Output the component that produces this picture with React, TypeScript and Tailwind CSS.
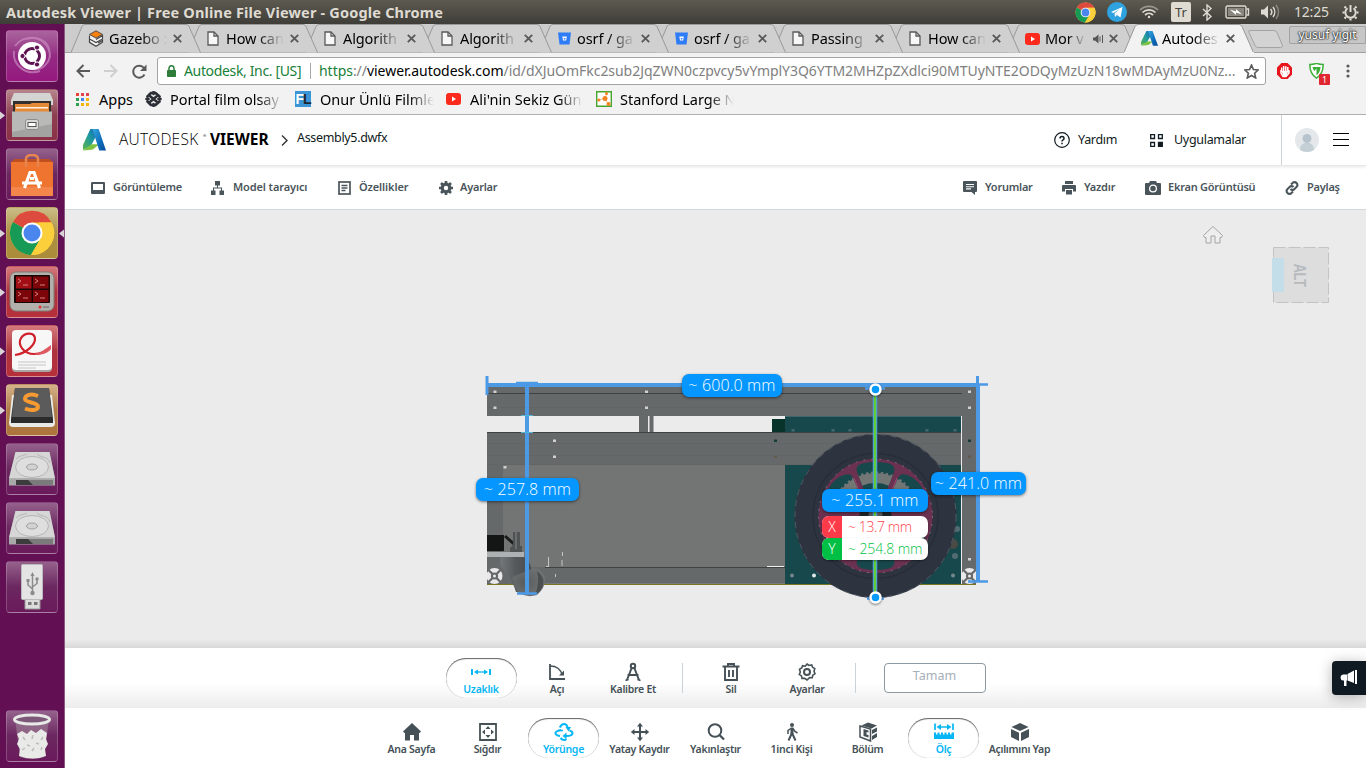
import React from "react";

type Kids = { children?: React.ReactNode };

/* ---------- small glyphs ---------- */

const PageIcon = () => (
  <svg width="12" height="15" viewBox="0 0 12 15" fill="#f7f7f7" stroke="#5a5a5a" strokeWidth="1.3">
    <path d="M1 1h6l4 4v9H1z" />
    <path d="M7 1v4h4" fill="none" />
  </svg>
);
const GazeboIcon = () => (
  <svg width="16" height="17" viewBox="0 0 16 17">
    <path d="M1.500 5.500L8 9l6.500-3.500V12L8 16 1.500 12z" fill="#f4f4f4" />
    <path d="M8 .8l6.500 3.600L8 8 1.500 4.400z" fill="#f58113" stroke="#3a3a3a" strokeWidth=".8" />
    <path d="M1.500 5.500V12.300L8 16.200l6.500-3.900M1.500 9L8 12.500l6.500-3.500V5.500L8 9.500M14.500 12.300V10.500L10 13" fill="none" stroke="#444" strokeWidth="1.200" />
  </svg>
);
const BucketIcon = () => (
  <svg width="13" height="13" viewBox="0 0 13 13">
    <path d="M0 .5h13L11.500 12.500h-10z" fill="#2f7df6" />
    <path d="M4.300 4.500h4.500l-.7 4H5z" fill="#fff" />
    <path d="M5.800 6h1.600v1.500H5.800z" fill="#2f7df6" />
  </svg>
);
const YouTube = () => (
  <svg width="15" height="12" viewBox="0 0 15 12">
    <rect width="15" height="12" rx="3" fill="#fb2a1d" />
    <path d="M6 3.500v5L10 6z" fill="#fff" />
  </svg>
);
const ALogo = ({ w = 23, h = 22 }: { w?: number; h?: number }) => (
  <svg width={w} height={h} viewBox="0 0 22 22" preserveAspectRatio="none">
    <defs>
      <linearGradient id="alg" x1="0" y1="1" x2="1" y2="0">
        <stop offset="0" stopColor="#62b54a" />
        <stop offset=".55" stopColor="#1d9aa0" />
        <stop offset="1" stopColor="#1468b8" />
      </linearGradient>
      <linearGradient id="alb" x1="0" y1="0" x2="1" y2="1">
        <stop offset="0" stopColor="#37a7dd" />
        <stop offset=".6" stopColor="#0d6cbb" />
        <stop offset="1" stopColor="#0a4a98" />
      </linearGradient>
    </defs>
    <path d="M7 0h6l-1 8-4.500 9L0 21V16z" fill="url(#alg)" />
    <path d="M0 21.500l8-6.200h7.500l-6 5.200-9 1z" fill="#7cc243" />
    <path d="M9 0h6l7 21.500h-6.500z" fill="url(#alb)" />
  </svg>
);
const ChromeLogo = ({ s }: { s: number }) => (
  <svg width={s} height={s} viewBox="0 0 46 46">
    <circle cx="23" cy="23" r="22" fill="#fbcf3b" />
    <path d="M23 23L3.950 12A22 22 0 0 1 42.500 12.500H23z" fill="#dd4b3e" />
    <path d="M3.950 12A22 22 0 0 0 22 45l10-17.500-9-4.500z" fill="#169a55" />
    <path d="M42.500 12.500A22 22 0 0 1 22 45l10-17 2-8-4-7.500z" fill="#fbcf3b" />
    <circle cx="23" cy="23" r="10.500" fill="#fff" />
    <circle cx="23" cy="23" r="8.500" fill="#4a86ee" />
  </svg>
);

/* ---------- system bar ---------- */

const SystemBar = () => (
  <header className="flex h-6 shrink-0 items-center bg-linear-to-b from-[#5d5a50] to-[#3e3d38] pl-[6px] font-['Noto_Sans',sans-serif] text-[#dfdbd2]">
    <h1 className="w-[500px] whitespace-nowrap text-[14.500px] font-bold leading-6 tracking-[0.180px]">
      Autodesk Viewer | Free Online File Viewer - Google Chrome
    </h1>
    <div className="ml-auto flex h-6 w-[291px] items-center">
      <ChromeLogo s={21} />
      <svg className="ml-[11px]" width="20" height="20" viewBox="0 0 20 20">
        <circle cx="10" cy="10" r="10" fill="#2fa3df" />
        <path d="M4 10l11.500-5-2 10.500-3.500-2.500-2 2-.5-3.500L12.500 7l-6 4z" fill="#fff" />
      </svg>
      <svg className="ml-[12px]" width="20" height="14" viewBox="0 0 20 14" fill="none" stroke="#dfdbd2" strokeWidth="1.700">
        <path d="M1 5a13 13 0 0 1 18 0" opacity=".5" />
        <path d="M3.500 7.500a9.500 9.500 0 0 1 13 0M6 10a6 6 0 0 1 8 0" />
        <circle cx="10" cy="12" r="1.200" fill="#dfdbd2" stroke="none" />
      </svg>
      <div className="ml-[12px] h-5 w-5 rounded-[2px] bg-[#dfdbd2] text-center text-[13px] leading-5 text-[#45443e]">Tr</div>
      <svg className="ml-[10px]" width="12" height="17" viewBox="0 0 12 17" fill="none" stroke="#dfdbd2" strokeWidth="1.400">
        <path d="M2 5l8 7.500L6 16V1l4 3.500L2 12" />
      </svg>
      <svg className="ml-[12px]" width="25" height="14" viewBox="0 0 25 14" fill="none" stroke="#dfdbd2" strokeWidth="1.400">
        <rect x="1" y="1" width="20" height="12" rx="1.500" />
        <path d="M21.500 4h2v6h-2" />
        <rect x="3" y="3" width="16" height="8" fill="#8a877e" stroke="none" />
        <path d="M5 4.500l6 2V4l6 5.500-6-2V10z" fill="#fff" stroke="none" />
      </svg>
      <svg className="ml-[11px]" width="20" height="16" viewBox="0 0 20 16" fill="none" stroke="#dfdbd2" strokeWidth="1.500">
        <path d="M0 5.500h3l4-4v13l-4-4H0z" fill="#dfdbd2" stroke="none" />
        <path d="M9.500 5a4.500 4.500 0 0 1 0 6M12 3a8 8 0 0 1 0 10" />
        <path d="M15 1a11 11 0 0 1 0 14" opacity=".4" />
      </svg>
      <span className="ml-[13px] w-[36px] whitespace-nowrap text-[14px] leading-6 tracking-[-0.200px]">12:25</span>
      <svg className="ml-[12px]" width="17" height="17" viewBox="0 0 17 17" fill="none" stroke="#dfdbd2">
        <path d="M5.500 4.300a5.200 5.200 0 1 0 6 0" strokeWidth="2" />
        <path d="M8.500 1v7" strokeWidth="2" />
        <path d="M4 4L2.500 2.500M13 4l1.500-1.500M2.500 8.500H.5M14.500 8.500h2M4 13l-1.500 1.500M13 13l1.500 1.500M8.500 14.500v2" strokeWidth="2.200" />
      </svg>
    </div>
  </header>
);

/* ---------- launcher ---------- */

const Tile = ({ bg, arrow, right, children }: Kids & { bg: string; arrow?: boolean; right?: boolean }) => (
  <div className={`relative flex h-[52px] w-[52px] shrink-0 items-center justify-center rounded-[4px] border border-white/20 ${bg}`}>
    {arrow && (
      <svg className="absolute top-[21px] -left-[7px]" width="5" height="9" viewBox="0 0 5 9">
        <path d="M0 .5l5 4-5 4z" fill="#d9d4d8" />
      </svg>
    )}
    {right && (
      <svg className="absolute top-[21px] -right-[7px]" width="5" height="9" viewBox="0 0 5 9">
        <path d="M5 .5l-5 4 5 4z" fill="#d9d4d8" />
      </svg>
    )}
    {children}
  </div>
);
const glass = "bg-linear-to-b from-[#95618c] via-[#6b2760] to-[#6a1a5b]";

const Disk = () => (
  <svg width="46" height="36" viewBox="0 0 46 36">
    <path d="M6.500 1h34L46 27v7H0v-7z" fill="#8a8a8a" />
    <path d="M6.500 1h34L46 27.500H0z" fill="#d6d6d6" />
    <path d="M0 28h46v6.500H0z" fill="#a9a9a9" />
    <path d="M7 29h37v5H7z" fill="#3c3c3c" />
    <path d="M19 29h25v5H24z" fill="#7b7b7b" />
    <ellipse cx="23" cy="16" rx="16.500" ry="10.500" fill="#dedede" stroke="#b5b5b5" />
    <ellipse cx="23" cy="16" rx="5.500" ry="3" fill="#d2d2d2" stroke="#a2a2a2" />
    <path d="M7 8C11 4 14 5 18 3M28 3c4 4 11 2 13 9" fill="none" stroke="#b5b5b5" />
  </svg>
);

const Launcher = () => (
  <nav className="flex w-[65px] shrink-0 flex-col gap-[7px] border-r border-[#8a5a82] bg-[#620f53] pt-[6px] pb-[6px] pl-[6px]">
    <Tile bg="bg-linear-to-b from-[#a9649d] via-[#942a83] to-[#95177f]">
      <svg width="50" height="50" viewBox="0 0 50 50" fill="none">
        <path d="M8 15C16 3 38 4 42 18c4 14-8 22-17 20M7 20c-2 14 12 25 26 20M19 8c14-4 24 6 24 18" stroke="#c98bc0" strokeWidth="2" opacity=".7" />
        <circle cx="25" cy="25" r="14" fill="#fff" />
        <circle cx="25" cy="25" r="7.500" stroke="#5d1350" strokeWidth="3" />
        <path d="M25 25L14 25M25 25l6-10M25 25l6 10" stroke="#fff" strokeWidth="1.500" />
        <circle cx="25" cy="25" r="5.500" fill="#fff" />
        <circle cx="15.500" cy="25" r="2.600" fill="#5d1350" stroke="#fff" />
        <circle cx="30" cy="16.500" r="2.600" fill="#5d1350" stroke="#fff" />
        <circle cx="30" cy="33.500" r="2.600" fill="#5d1350" stroke="#fff" />
      </svg>
    </Tile>
    <Tile arrow bg="bg-linear-to-b from-[#b6868d] via-[#8d3f50] to-[#8d3048]">
      <svg width="44" height="45" viewBox="0 0 44 45">
        <path d="M4 0h36l3 7v5H1V7z" fill="#d4d4d2" />
        <path d="M3 8h38v15H3z" fill="#33302d" />
        <path d="M5 11h15l2-1h17v14H5z" fill="#e58a36" />
        <path d="M6 14h32v1.500H6z" fill="#fff3df" />
        <path d="M2 19h40v25H2z" fill="#a3a3a1" />
        <path d="M2 18.500h40V31L2 39z" fill="#b9b9b7" />
        <rect x="15.500" y="26.500" width="13" height="10" rx="2" fill="#d8d8d6" stroke="#8c8c8a" />
        <rect x="18" y="29.500" width="8" height="4" fill="#fff" stroke="#555" />
      </svg>
    </Tile>
    <Tile bg={glass}>
      <svg className="mt-1" width="44" height="44" viewBox="0 0 44 44">
        <path d="M1 8h42v34H1z" fill="#ef7430" />
        <path d="M1 8l4-3h34l4 3z" fill="#c05020" />
        <path d="M1 33h42v9H1z" fill="#f4854b" />
        <path d="M16 13V5q0-4 6-4t6 4v8" fill="none" stroke="#e8854f" strokeWidth="2.500" />
        <path d="M14.500 34L20 18.500h4L29.500 34M12 29h20M20 24.500h4" fill="none" stroke="#fff" strokeWidth="3.200" />
      </svg>
    </Tile>
    <Tile arrow right bg="bg-linear-to-b from-[#cbbd86] via-[#ad9045] to-[#ab8c39]">
      <ChromeLogo s={46} />
    </Tile>
    <Tile arrow bg="bg-linear-to-b from-[#d4797c] via-[#ae333e] to-[#b6303b]">
      <svg width="46" height="42" viewBox="0 0 46 42">
        <rect x="1" y="1" width="44" height="39" rx="6" fill="#b3b0ab" stroke="#7f7b77" />
        <rect x="5" y="4" width="36" height="28" rx="1" fill="#180707" />
        <path d="M7 5.500h15.500v12H7z" fill="#a30e14" />
        <path d="M24 5.500h15.500v12H24zM7 19h15.500v12H7zM24 19h15.500v12H24z" fill="#7b0509" />
        <path d="M9 8l3 2-3 2M14 14h5M26 8l3 2-3 2M31 14h5M9 21l3 2-3 2M14 27h5M26 21l3 2-3 2M31 27h5" fill="none" stroke="#d28080" strokeWidth="1" />
        <circle cx="31" cy="36" r="1.500" fill="#d33" />
        <path d="M34 36h6" stroke="#666" />
      </svg>
    </Tile>
    <Tile arrow bg="bg-linear-to-b from-[#d4797c] via-[#ae333e] to-[#b6303b]">
      <svg width="42" height="44" viewBox="0 0 42 44">
        <rect x="1" y="2" width="40" height="41" rx="4" fill="#a9a5a5" />
        <rect x="1" y="1" width="40" height="40" rx="4" fill="#f7f7f7" />
        <path d="M4 26C17 24 24 15 24 10 24 3 14 3 10 9 6 16 13 25 23 25c7 0 12-2 16-6" fill="none" stroke="#d0202c" strokeWidth="2.200" />
        <path d="M40 16c-6 4-10 8-18 9 8 2 15-1 18-5z" fill="#dd5a62" />
        <path d="M7 33h28M7 36h28M7 39h18" stroke="#c5c5c5" strokeWidth="1" />
      </svg>
    </Tile>
    <Tile arrow bg="bg-linear-to-b from-[#d5b28b] via-[#b07c48] to-[#ad753c]">
      <svg className="mb-1" width="46" height="42" viewBox="0 0 46 42">
        <path d="M3 8h40l3 28q0 4-4 4H4q-4 0-4-4z" fill="#e9e9e7" />
        <path d="M6 1h34l4 31v4H2v-4z" fill="#2c2c2c" />
        <path d="M6 1h34l3 29H3z" fill="#5b5b5b" />
        <path d="M29 9c-7-3-13-1-13 3 0 4 13 3 13 7.500 0 4-7 4.500-13 2" fill="none" stroke="#f79a32" strokeWidth="4" />
      </svg>
    </Tile>
    <Tile bg={glass}><Disk /></Tile>
    <Tile bg={glass}><Disk /></Tile>
    <Tile bg={glass}>
      <svg width="22" height="46" viewBox="0 0 22 46">
        <path d="M4 35h15v10H4z" fill="#dcdcdc" stroke="#999" />
        <path d="M7 38h3.500v3H7zM13 38h3.500v3H13z" fill="#777" />
        <rect x=".5" y=".5" width="21" height="35" rx="1" fill="#e4e4e4" stroke="#bbb" />
        <path d="M11.500 12v16M11.500 25L7 21v-4M11.500 23l4.500-3.500V15" fill="none" stroke="#8b8b8b" strokeWidth="1.500" />
        <circle cx="11.500" cy="29" r="2.200" fill="#8b8b8b" />
        <path d="M11.500 8l2 4h-4zM5.500 15h3v3h-3z" fill="#8b8b8b" />
        <circle cx="16" cy="15" r="1.700" fill="#8b8b8b" />
      </svg>
    </Tile>
    <div className="mt-auto">
      <Tile bg={glass}>
        <svg width="40" height="48" viewBox="0 0 40 48">
          <path d="M3 7h34l-5 38q-12 4-24 0z" fill="#95708f" opacity=".8" />
          <path d="M5 22l5-3 5 3 4-4 5 3 5-4 6 4-1 6 2 5-3 5 1 7q-13 5-27 0l1-7-3-5 2-5z" fill="#e9e9e7" />
          <path d="M11 25l2 3M15 33l3 1M10 38l3-2M21 23l-1 4M24 31l3 1M20 39l2-3M31 25l-2 3M29 38l1-3" fill="none" stroke="#bdbdbb" strokeWidth="1.500" />
          <ellipse cx="20" cy="7.500" rx="17.500" ry="4.500" fill="#7d5778" stroke="#e8e8e6" strokeWidth="3" />
        </svg>
      </Tile>
    </div>
  </nav>
);

/* ---------- browser chrome ---------- */

const tabs: { icon: React.ReactNode; label: string; audio?: boolean; active?: boolean }[] = [
  { icon: <GazeboIcon />, label: "Gazebo :" },
  { icon: <PageIcon />, label: "How can" },
  { icon: <PageIcon />, label: "Algorith" },
  { icon: <PageIcon />, label: "Algorith" },
  { icon: <BucketIcon />, label: "osrf / ga" },
  { icon: <BucketIcon />, label: "osrf / ga" },
  { icon: <PageIcon />, label: "Passing" },
  { icon: <PageIcon />, label: "How can" },
  { icon: <YouTube />, label: "Mor v", audio: true },
  { icon: <ALogo w={17} h={15} />, label: "Autodes", active: true },
];

const TabStrip = () => (
  <div className="relative flex h-[29px] shrink-0 border-b border-[#a0a0a0] bg-[#cccccc] pl-[6px]">
    {tabs.map((t, i) => (
      <div key={i} className="relative flex h-[29px] w-[117px] shrink-0 items-center pl-[16px]" style={{ zIndex: t.active ? 20 : 10 - i }}>
        <svg className="absolute top-0 left-0" width="130" height="29" viewBox="0 0 130 29">
          <path d="M0 28.500L11 2.500Q12 .5 14 .5H115Q117 .5 118 2.500L129.500 28.500" fill={t.active ? "#f2f2f2" : "#d0d0d0"} stroke="#999" />
          {t.active && <path d="M0 28.500h130" stroke="#f2f2f2" />}
        </svg>
        <span className="relative flex w-[18px] justify-center">{t.icon}</span>
        <span className={`relative ml-[4px] whitespace-nowrap mask-r-from-55% mask-r-to-100% text-[14.500px] leading-[27px] tracking-[-0.100px] text-black ${t.audio ? "w-[41px]" : "w-[58px]"}`}>
          {t.label}
        </span>
        {t.audio && (
          <svg className="relative ml-[7px]" width="11" height="10" viewBox="0 0 11 10" fill="#555">
            <path d="M0 3.500h2L5.500.5v9L2 6.500H0zM6.500 2.500h1v5h-1zM9 1h1v8H9z" />
          </svg>
        )}
        <svg className={`relative ${t.audio ? "ml-[5px]" : "ml-[6px]"}`} width="9" height="9" viewBox="0 0 9 9" stroke="#5a5a5a" strokeWidth="1.900">
          <path d="M.8 .8l7.400 7.400M8.200 .8L.8 8.200" />
        </svg>
      </div>
    ))}
    <svg className="ml-[7px] mt-[6px] shrink-0" width="36" height="19" viewBox="0 0 36 19">
      <path d="M2 .5h24q2 0 3 2l5.500 13q0 2-2 2H10q-2 0-3-2L1 2.500Q0 .5 2 .5z" fill="#d3d3d3" stroke="#a3a3a3" />
    </svg>
    <div className="ml-auto mt-[2px] h-[18px] w-[77px] rounded-l-[2px] border border-[#a3a3a3] bg-[#c6c6c6] text-center text-[12px] leading-[16px] text-white [text-shadow:0_0_2px_#000,0_0_2px_#333,0_0_1px_#333]">
      yusuf yigit
    </div>
  </div>
);

const AddressBar = () => (
  <div className="flex h-[36px] shrink-0 items-center bg-[#f2f2f2] pl-[11px]">
    <svg width="14" height="14" viewBox="0 0 14 14" fill="none" stroke="#5a5a5a" strokeWidth="2">
      <path d="M14 7H1.500M7.500 1l-6 6 6 6" />
    </svg>
    <svg className="ml-[14px]" width="14" height="14" viewBox="0 0 14 14" fill="none" stroke="#cfcfcf" strokeWidth="2">
      <path d="M0 7h12.500M6.500 1l6 6-6 6" />
    </svg>
    <svg className="ml-[14px]" width="15" height="15" viewBox="0 0 15 15" fill="none" stroke="#5a5a5a" strokeWidth="2">
      <path d="M12.500 10.500a6 6 0 1 1-.5-6.500" />
      <path d="M14.500 .5V7H8z" fill="#5a5a5a" stroke="none" />
    </svg>
    <div className="ml-[10px] flex h-[28px] w-[1109px] shrink-0 items-center rounded-[3px] border border-[#a3a3a3] bg-white pl-[9px] text-[14px] leading-[26px]">
      <svg width="9" height="12" viewBox="0 0 9 12">
        <path d="M2 5V3.200a2.500 2.500 0 0 1 5 0V5" fill="none" stroke="#2f7d3b" strokeWidth="1.500" />
        <rect y="5" width="9" height="7" rx=".8" fill="#2f7d3b" />
      </svg>
      <span className="ml-[8px] w-[118px] whitespace-nowrap tracking-[-0.350px] text-[#198038]">Autodesk, Inc. [US]</span>
      <span className="ml-[8px] h-4 w-px bg-[#a8a8a8]" />
      <span className="ml-[8px] w-[920px] whitespace-nowrap tracking-[-0.040px] text-[#808080]">
        <span className="text-[#198038]">https</span>://<span className="text-black">viewer.autodesk.com</span>
        /id/dXJuOmFkc2sub2JqZWN0czpvcy5vYmplY3Q6YTM2MHZpZXdlci90MTUyNTE2ODQyMzUzN18wMDAyMzU0Nz...
      </span>
      <svg className="ml-[5px]" width="15" height="15" viewBox="0 0 14 14" fill="none" stroke="#5a5a5a" strokeWidth="1.500">
        <path d="M7 1l1.800 4.200 4.400.4-3.300 3 1 4.400L7 10.700 3.100 13l1-4.400-3.300-3 4.400-.4z" />
      </svg>
    </div>
    <svg className="ml-[11px]" width="15" height="16" viewBox="0 0 15 16">
      <path d="M4.500 0h6L15 4.500v7L10.500 16h-6L0 11.500v-7z" fill="#e8141c" />
      <path d="M4 7v3l2 3.500h3L12 10V8l-1.200.5V4M4.700 9V4.500M6.700 8V3M8.800 8V3.300" fill="none" stroke="#fff" strokeWidth="1.500" />
      <path d="M4.500 8h6v4L9 13.500H6.500z" fill="#fff" />
    </svg>
    <div className="relative ml-[17px] h-[17px] w-[16px]">
      <svg width="15" height="16" viewBox="0 0 15 16">
        <path d="M.8 1.500q3.500 0 6.700-1.200 3.200 1.200 6.700 1.200 0 9.500-6.700 13.700Q.8 11 .8 1.500z" fill="#fff" stroke="#3fae3a" strokeWidth="1.500" />
        <path d="M3.500 4h8q0 5-4 8.500V5.500L5.500 8Q3.800 6.500 3.500 4z" fill="#3fae3a" />
      </svg>
      <span className="absolute top-[11px] left-[10px] h-[11px] w-[11px] rounded-[1px] bg-[#e0262f] text-center text-[9px] leading-[11px] text-white">1</span>
    </div>
    <svg className="ml-[21px]" width="4" height="14" viewBox="0 0 4 14" fill="#5a5a5a">
      <circle cx="2" cy="2" r="1.600" /><circle cx="2" cy="7" r="1.600" /><circle cx="2" cy="12" r="1.600" />
    </svg>
  </div>
);

const Mark = ({ w, pad, icon, children }: Kids & { w: string; pad: string; icon: React.ReactNode }) => (
  <div className={`flex shrink-0 items-center ${w}`}>
    <span className={`flex shrink-0 ${pad}`}>{icon}</span>
    <span className="w-0 grow whitespace-nowrap mask-r-from-78% mask-r-to-100% text-[14.500px] leading-[24px] tracking-[-0.020px]">{children}</span>
  </div>
);

const Bookmarks = () => (
  <div className="flex h-[26px] shrink-0 items-center border-b border-[#b3b3b3] bg-[#f2f2f2] pb-[5px] pl-[11px] text-black">
    <svg width="13" height="13" viewBox="0 0 13 13">
      <path d="M0 0h3v3H0z" fill="#ea4335" /><path d="M5 0h3v3H5zM10 0h3v3h-3z" fill="#e5434b" />
      <path d="M0 5h3v3H0z" fill="#2da14f" /><path d="M5 5h3v3H5z" fill="#4285f4" /><path d="M10 5h3v3h-3z" fill="#f6b50b" />
      <path d="M0 10h3v3H0z" fill="#2da14f" /><path d="M5 10h3v3H5zM10 10h3v3h-3z" fill="#f6b50b" />
    </svg>
    <span className="ml-[10px] w-[46px] text-[14.500px] leading-[24px]">Apps</span>
    <Mark w="w-[138px]" pad="w-[25px]" icon={
      <svg width="17" height="16" viewBox="0 0 17 16" fill="none" stroke="#2d3137" strokeWidth="3" strokeLinecap="round">
        <path d="M2.500 5.500L6 2M10.500 2l4 3.500M2.500 10.500L6 14M10.500 14l4-3.500M5.500 5.500l6 5M11.500 5.500l-6 5M1.500 8h2M13.500 8h2M8.500 1v2M8.500 13v2" strokeWidth="2.700" />
      </svg>
    }>Portal film olsay</Mark>
    <span className="w-[12px]" />
    <Mark w="w-[139px]" pad="w-[25px]" icon={
      <span className="h-4 w-4 bg-[#3a95d6] text-center font-['Liberation_Sans',sans-serif] text-[14px] font-bold leading-4 tracking-[-1px] text-white">F<span className="text-[#1d2830]">L</span></span>
    }>Onur Ünlü Filmle</Mark>
    <span className="w-[12px]" />
    <Mark w="w-[137px]" pad="w-[24px]" icon={<YouTube />}>Ali'nin Sekiz Gün</Mark>
    <span className="w-[13px]" />
    <Mark w="w-[138px]" pad="w-[24px]" icon={
      <svg width="16" height="16" viewBox="0 0 16 16">
        <path d="M.7 .7h14.600v14.600H.7z" fill="#fff" stroke="#4aa52e" strokeWidth="1.400" />
        <path d="M3 9l6-2 2-4M9 7l3 6" stroke="#f5c38a" fill="none" />
        <g fill="#f58220"><circle cx="9" cy="7.500" r="2.500" /><circle cx="2.800" cy="9" r="1.600" /><circle cx="10.500" cy="2.500" r="1.500" /><circle cx="12.500" cy="13" r="2" /></g>
      </svg>
    }>Stanford Large N</Mark>
  </div>
);

/* ---------- viewer header ---------- */

const AppHeader = () => (
  <div className="relative z-10 flex h-[51px] shrink-0 items-center border-b border-[#e8e8e8] bg-white text-[#0f1a21] shadow-[0_1px_3px_rgba(0,0,0,0.1)]">
    <span className="ml-[18px] flex"><ALogo /></span>
    <span className="ml-[13px] w-[84px] whitespace-nowrap font-['Open_Sans',sans-serif] text-[15.500px] font-light tracking-[0.250px] text-black">AUTODESK</span>
    <span className="mt-[-8px] w-[3px] text-[4px]">®</span>
    <span className="ml-[4px] w-[60px] whitespace-nowrap font-['Noto_Sans',sans-serif] text-[15.500px] font-bold text-black">VIEWER</span>
    <svg className="ml-[11px]" width="7" height="11" viewBox="0 0 7 11" fill="none" stroke="#333" strokeWidth="1.400"><path d="M1 .5l5 5-5 5" /></svg>
    <span className="mt-[-4px] ml-[9px] w-[101px] whitespace-nowrap text-[12.500px] tracking-[-0.330px]">Assembly5.dwfx</span>
    <div className="ml-auto flex h-[50px] w-[312px] items-center">
      <svg width="16" height="16" viewBox="0 0 16 16" fill="none" stroke="#0f1a21">
        <circle cx="8" cy="8" r="7.300" strokeWidth="1.200" />
        <path d="M6 6.600q0-2 2-2t2 1.800q0 1-1 1.500T8 9.500" strokeWidth="1.500" />
        <path d="M8 10.800v1.400" strokeWidth="1.500" />
      </svg>
      <span className="ml-[8px] w-[40px] whitespace-nowrap text-[12.500px] tracking-[-0.300px]">Yardım</span>
      <svg className="ml-[32px]" width="13" height="13" viewBox="0 0 13 13" fill="none" stroke="#0f1a21" strokeWidth="1.300">
        <path d="M.7 .7h3.800v3.800H.7zM8.500 .7h3.800v3.800H8.500zM.7 8.500h3.800v3.800H.7z" /><path d="M8.500 8.500h3.800v3.800H8.500z" fill="#0f1a21" />
      </svg>
      <span className="ml-[11px] w-[72px] whitespace-nowrap text-[12.500px] tracking-[-0.300px]">Uygulamalar</span>
      <span className="ml-[35px] h-[50px] w-px bg-[#ccd3d8]" />
      <svg className="ml-[13px]" width="24" height="24" viewBox="0 0 24 24">
        <circle cx="12" cy="12" r="12" fill="#e4e8eb" />
        <path d="M5 22q0-7 7-7.500 7 .5 7 7.500-7 4-14 0z" fill="#c3ced5" /><circle cx="12" cy="10.500" r="4.500" fill="#b7c4cd" />
      </svg>
      <div className="mb-px ml-[14px] flex w-[16px] flex-col gap-[5px]">
        <span className="h-px bg-black" /><span className="h-px bg-black" /><span className="h-px bg-black" />
      </div>
    </div>
  </div>
);

const Tool = ({ w, icon, gap, children }: Kids & { w: string; gap: string; icon: React.ReactNode }) => (
  <div className={`flex shrink-0 items-center ${w}`}>
    <span className={`flex shrink-0 ${gap}`}>{icon}</span>
    <span className="whitespace-nowrap">{children}</span>
  </div>
);

const ViewerToolbar = () => (
  <div className="flex h-[44px] shrink-0 items-center border-b border-[#d3d8dc] bg-white pl-[26px] text-[11px] font-semibold tracking-[-0.240px] text-[#4a555b]">
    <Tool w="w-[120px]" gap="w-[22px]" icon={
      <svg width="14" height="12" viewBox="0 0 14 12"><rect width="14" height="12" rx="1" fill="#4a555b" /><path d="M2 2h10v6H2z" fill="#fff" /></svg>
    }>Görüntüleme</Tool>
    <Tool w="w-[127px]" gap="w-[22px]" icon={
      <svg width="13" height="14" viewBox="0 0 13 14" fill="#4a555b"><path d="M4 0h5v4.500H4zM6 4h1v3H6zM2 6.500h9V10h-1V7.500H3V10H2zM0 9.500h4.500V14H0zM8.500 9.500H13V14H8.500z" /></svg>
    }><span className="tracking-[-0.120px]">Model tarayıcı</span></Tool>
    <Tool w="w-[101px]" gap="w-[21px]" icon={
      <svg width="13" height="14" viewBox="0 0 13 14"><rect x="1" y="1" width="11" height="12" fill="#fff" stroke="#4a555b" strokeWidth="1.700" /><path d="M3.500 4.500h6M3.500 7h6M3.500 9.500h4" stroke="#4a555b" strokeWidth="1.300" /></svg>
    }><span className="tracking-[-0.120px]">Özellikler</span></Tool>
    <Tool w="w-[70px]" gap="w-[21px]" icon={
      <svg width="14" height="14" viewBox="0 0 14 14"><circle cx="7" cy="7" r="3.800" fill="none" stroke="#4a555b" strokeWidth="3.200" /><path d="M7 0v3M7 11v3M0 7h3M11 7h3M2 2l2 2M10 10l2 2M12 2l-2 2M4 10l-2 2" stroke="#4a555b" strokeWidth="2.600" /></svg>
    }>Ayarlar</Tool>
    <div className="ml-auto flex w-[403px]">
      <Tool w="w-[99px]" gap="w-[22px]" icon={
        <svg width="14" height="14" viewBox="0 0 14 14"><path d="M1 0h12q1 0 1 1v9q0 1-1 1h-1v3L8.500 11H1q-1 0-1-1V1q0-1 1-1z" fill="#4a555b" /><path d="M3 3.500h8M3 5.700h8M3 7.900h5" stroke="#fff" strokeWidth="1.100" /></svg>
      }>Yorumlar</Tool>
      <Tool w="w-[83px]" gap="w-[22px]" icon={
        <svg width="14" height="14" viewBox="0 0 14 14"><path d="M3 0h8v3H3zM1 4h12q1 0 1 1v5.500h-3V8H3v2.500H0V5q0-1 1-1z" fill="#4a555b" /><path d="M4 9h6v4.500H4z" fill="#4a555b" /></svg>
      }>Yazdır</Tool>
      <Tool w="w-[140px]" gap="w-[23px]" icon={
        <svg width="16" height="14" viewBox="0 0 16 14"><path d="M5 0h6l1 2h3q1 0 1 1v10q0 1-1 1H1q-1 0-1-1V3q0-1 1-1h3z" fill="#4a555b" /><circle cx="8" cy="7.500" r="3.400" fill="none" stroke="#fff" strokeWidth="1.300" /></svg>
      }>Ekran Görüntüsü</Tool>
      <Tool w="w-[60px]" gap="w-[22px]" icon={
        <svg width="14" height="14" viewBox="0 0 14 14" fill="none" stroke="#4a555b" strokeWidth="2.100"><path d="M6 3.500L8 1.500q2-1 3.500.5t.5 3.500l-3 3q-2 1-3.500-.5" /><path d="M8 10.500l-2 2q-2 1-3.500-.5T2 8.500l3-3q2-1 3.500.5" /></svg>
      }>Paylaş</Tool>
    </div>
  </div>
);

/* ---------- model ---------- */

const Cross = ({ x, y }: { x: number; y: number }) => (
  <g>
    <circle cx={x} cy={y} r="8" fill="#e9e9e9" />
    <path d={`M${x - 6} ${y - 6}l12 12M${x + 6} ${y - 6}l-12 12`} stroke="#65696a" strokeWidth="2.200" />
    <circle cx={x} cy={y} r="3.600" fill="#65696a" /><circle cx={x} cy={y} r="1.500" fill="#e9e9e9" />
  </g>
);

const Dots = ({ pts, fill }: { pts: number[][]; fill: string }) => (
  <>{pts.map(([x, y], i) => <rect key={i} x={x - 1.5} y={y - 1} width="3" height="2.500" fill={fill} />)}</>
);

const opening = "M862 463.500Q875.500 460 889 463.500 896 465.500 894 472L883 500H868L857 472Q855 465.500 862 463.500z";
const sideOpening = "M826 494Q832 478 846 474.500 851 473 853 478L864 503 830 501z";

const Wheel = () => (
  <g>
    <defs>
      <clipPath id="openings">
        <path d={opening} />
        <path d={sideOpening} />
        <path d={sideOpening} transform="translate(1751 0) scale(-1 1)" />
        <path d={opening} transform="translate(0 1032) scale(1 -1)" />
        <path d={sideOpening} transform="translate(0 1032) scale(1 -1)" />
        <path d={sideOpening} transform="translate(1751 1032) scale(-1 -1)" />
      </clipPath>
    </defs>
    <ellipse cx="875.500" cy="516" rx="81" ry="82" fill="#2d333f" />
    <ellipse cx="875.500" cy="516" rx="80.500" ry="81.500" fill="none" stroke="#66727c" strokeWidth=".6" strokeDasharray="6 5" />
    <circle cx="875.500" cy="516" r="62.500" fill="none" stroke="#282e39" strokeWidth="1.500" />
    <circle cx="875.500" cy="516" r="57" fill="#6b3150" stroke="#96808d" strokeWidth=".7" strokeDasharray="2 6" />
    <g clipPath="url(#openings)">
      <path d="M815 456h121v121H815z" fill="#17484c" />
      <circle cx="875.500" cy="516" r="38" fill="none" stroke="#727675" strokeWidth="10" />
      <circle cx="875.500" cy="516" r="43.500" fill="none" stroke="#727675" strokeWidth="2" strokeDasharray="2.500 2.500" />
      <circle cx="875.500" cy="516" r="25" fill="none" stroke="#727675" strokeWidth="5" />
    </g>
    <path d="M854 478l10 24M897 478l-10 24" stroke="#a34870" strokeWidth=".9" />
    <ellipse cx="875.500" cy="515" rx="16" ry="14" fill="#202529" />
    <circle cx="875.500" cy="514" r="7" fill="#565b5e" />
  </g>
);

const Model = () => (
  <svg className="block" width="1301" height="438" viewBox="65 210 1301 438">
    <path d="M785 416h176v168H785z" fill="#17484c" />
    <path d="M772 419h13v13h-13z" fill="#08332a" />
    <path d="M785 416.500h176" stroke="#3f6568" />
    <Dots pts={[[793, 430], [833, 430], [850, 430], [927, 430], [955, 430]]} fill="#47666a" />
    <path d="M503 465h282v102H503z" fill="#727574" />
    <path d="M487 387h489v29H487zM487 432h474v33H487zM487 465h16v119h-16zM503 567h282v17H503zM962 387h14v197h-14z" fill="#66696a" />
    <path d="M961.500 416v168" stroke="#e8e8e8" strokeDasharray="4 12 5 24 4 29" />
    <path d="M639 416h9v16h-9zM649.500 416h4v16h-4z" fill="#66696a" />
    <path d="M487 393.500h475M487 432.500h474M545 567.500h240" stroke="#3e4242" />
    <path d="M487 407.500h475M487 443.500h474M487 455.500h474M487 464.500h474" stroke="#616566" />
    <path d="M545 583.500h240" stroke="#777b7b" />
    <path d="M487 584.500h489" stroke="#77761f" />
    <Dots pts={[[495, 391.500], [495, 407.500], [646.500, 391.500], [646.500, 407.500], [554.500, 440.500], [554.500, 456.500], [969.500, 391.500], [969.500, 407.500], [505, 467], [969.500, 559]]} fill="#d0d0d0" />
    <Dots pts={[[775.500, 440.500], [969.500, 440.500]]} fill="#173d3a" />
    <Dots pts={[[775.500, 456.500], [969.500, 456.500]]} fill="#645b4d" />
    <path d="M548.500 557v9.500M546 566.500h3M562.500 552v4M562 560v6M555.500 574v3" stroke="#c4c6c6" />
    <path d="M767 566.500h17" stroke="#eee" />
    <Cross x={494.500} y={576} />
    <Cross x={969.500} y={576} />
    <circle cx="792" cy="575.500" r="2" fill="#75878a" /><circle cx="814" cy="575.500" r="2" fill="#e2e8e8" />
    <circle cx="953" cy="575.500" r="2" fill="#75878a" /><circle cx="955" cy="556" r="3" fill="#536c73" /><circle cx="957" cy="529" r="3" fill="#536c73" />
    <circle cx="953" cy="544" r="5" fill="#4a4b45" />

    {/* caster */}
    <path d="M487 535h17v16h-17z" fill="#141616" />
    <path d="M505 536l9 8" stroke="#1b1d1d" strokeWidth="3" />
    <path d="M513 532h7v14h2v7h-12v-5l3-3z" fill="#4f5354" />
    <path d="M515 532h2v17h-2z" fill="#6a6e6f" />
    <path d="M487 552h37v5h-37z" fill="#adb1b2" />
    <defs>
      <linearGradient id="fork" x1="0" x2="1">
        <stop offset="0" stopColor="#74787a" />
        <stop offset=".5" stopColor="#56595b" />
        <stop offset="1" stopColor="#4a4d4f" />
      </linearGradient>
      <radialGradient id="roller" cx=".4" cy=".5" r=".65">
        <stop offset="0" stopColor="#585c5d" />
        <stop offset="1" stopColor="#717576" />
      </radialGradient>
    </defs>
    <path d="M501 557h23q6 4 7 11l-3 24h-12q-3-10-8-17-8-8-8-13z" fill="url(#fork)" />
    <path d="M512 577q2 10 7 16 8 5 18 2 8-7 8-15-1-10-11-12z" fill="url(#roller)" />
    <path d="M537 571q8 6 6 14-2 7-8 10 5-12 2-24z" fill="#4b4f50" />

    <Wheel />

    {/* dimension lines */}
    <g stroke="#4c99e6" fill="none">
      <path d="M487 385h491" strokeWidth="4" />
      <path d="M487 376v19M977.500 376v8" strokeWidth="3" />
      <path d="M527 384v209M978 384v197" strokeWidth="4" />
      <path d="M517 593.500h20M968 581.500h20M976 384.500h12M516 383h22M865 388.500h20M867 598.500h17" strokeWidth="2.500" />
      <path d="M521 415.500h12M521 432.500h12" stroke="#53b5d5" strokeWidth="1" />
      <path d="M875 390v207" strokeWidth="4.500" />
    </g>
    <path d="M875 394v200" stroke="#62ce37" strokeWidth="2.400" />
    <g fill="#079bff" stroke="#fff" strokeWidth="2.500" className="drop-shadow-[0_1px_1px_rgba(0,0,0,0.5)]">
      <circle cx="875.500" cy="389.500" r="5" /><circle cx="875.500" cy="597.500" r="5" />
    </g>

    {/* home */}
    <path d="M1203.500 235.500l9.500-9 9.500 9-1 2h-1.500v5.500h-5v-7h-4v7h-5v-5.500h-1.500z" fill="#eee" stroke="#a4a4a4" />
    {/* view cube */}
    <path d="M1273.500 247.500h55v55h-55z" fill="#dddddd" stroke="#c3c3c3" strokeDasharray="12 3" />
    <path d="M1272 258h12v34h-12z" fill="#c3dee9" />
  </svg>
);

const pill = "absolute h-[23px] rounded-[7px] bg-[#0597ff] text-center text-[16px] leading-[22px] tracking-[0.120px] text-white shadow-[0_1px_3px_rgba(0,0,0,0.5)]";
const axis = "absolute left-[757px] flex h-[22px] w-[106px] overflow-hidden rounded-[7px] bg-white text-[14px] leading-[22px] shadow-[0_1px_2px_rgba(0,0,0,0.4)]";

const Canvas = () => (
  <div className="relative h-[438px] shrink-0 overflow-hidden bg-[#ebebeb] font-['Open_Sans',sans-serif] font-light whitespace-nowrap">
    <Model />
    <div className={`${pill} top-[164px] left-[617px] w-[100px]`}>~ 600.0 mm</div>
    <div className={`${pill} top-[268px] left-[411px] w-[103px]`}>~ 257.8 mm</div>
    <div className={`${pill} top-[262px] left-[866px] w-[95px]`}>~ 241.0 mm</div>
    <div className={`${pill} top-[279px] left-[757px] w-[106px]`}>~ 255.1 mm</div>
    <div className={`${axis} top-[306px] text-[#ff3b4a]`}>
      <span className="w-5 bg-[#ff3b4a] text-center text-white">X</span><span className="ml-[6px] tracking-[-0.400px]">~ 13.7 mm</span>
    </div>
    <div className={`${axis} top-[328px] text-[#00bf45]`}>
      <span className="w-5 bg-[#00bf45] text-center text-white">Y</span><span className="ml-[6px] tracking-[-0.100px]">~ 254.8 mm</span>
    </div>
    <div className="absolute top-[55px] left-[1214px] w-[40px] rotate-90 scale-x-75 text-center font-['Liberation_Sans',sans-serif] text-[17px] font-bold leading-[20px] tracking-[-0.500px] text-[#b6babd]">ALT</div>
    <div className="absolute bottom-0 left-0 h-[9px] w-full bg-linear-to-b from-transparent to-black/8" />
  </div>
);

/* ---------- bottom toolbars ---------- */

const Action = ({ label, active, children }: Kids & { label: string; active?: boolean }) => (
  <div className={`flex h-[60px] w-[76px] shrink-0 items-center justify-center ${active ? "text-[#06b6f5]" : "text-[#455157]"}`}>
    <div className={`flex h-[40px] w-[71px] flex-col items-center rounded-[20px] ${active ? "bg-white shadow-[inset_0_1px_1px_rgba(0,0,0,0.6),inset_0_0_1px_rgba(0,0,0,0.35)]" : ""}`}>
      <svg className="mt-[4px] shrink-0" width="20" height="20" viewBox="0 0 20 20" fill="none" stroke="currentColor" strokeWidth="2">{children}</svg>
      <span className="text-[10.500px] font-semibold leading-[14px] tracking-[-0.280px] whitespace-nowrap">{label}</span>
    </div>
  </div>
);

const MeasureBar = () => (
  <div className="relative flex h-[60px] shrink-0 items-center border-b border-[#ececec] bg-linear-to-b from-white from-60% to-[#ededed] pl-[378px]">
    <Action label="Uzaklık" active>
      <path d="M1 7v6M19 7v6" /><path d="M4 10h12" strokeWidth="1.300" /><path d="M3 10l4-2.500v5zM17 10l-4-2.500v5z" fill="currentColor" stroke="none" />
    </Action>
    <Action label="Açı">
      <path d="M3 2v15h15" strokeWidth="1.800" /><path d="M3 4q10 0 12 9" strokeWidth="1.300" /><path d="M12 13.500h5v-5z" fill="currentColor" stroke="none" />
    </Action>
    <Action label="Kalibre Et">
      <circle cx="10" cy="4" r="2.200" /><path d="M9 5L4 18M11 5l5 13M4.500 13h11" /><path d="M2.500 18.500l3-1M17.500 18.500l-3-1" strokeWidth="1.500" />
    </Action>
    <span className="mx-[10.500px] h-[30px] w-px bg-[#c9d2d8]" />
    <Action label="Sil">
      <path d="M1.500 4.500h17M7 4V2h6v2M4 5v13h12V5M8 8v7M12 8v7" strokeWidth="1.900" />
    </Action>
    <Action label="Ayarlar">
      <circle cx="10" cy="10" r="3" />
      <path d="M10 2l2 1.500 2.700-.6.900 2.400 2.200 1.400-.8 2.600 1 2.400-2.200 1.500-.5 2.500-2.700-.1L10 18l-2.300-1.700-2.700.1-.5-2.500L2.300 12.400l1-2.400-.8-2.600 2.200-1.400.9-2.400 2.700.6z" strokeWidth="1.600" />
    </Action>
    <span className="ml-[9.500px] h-[30px] w-px bg-[#c9d2d8]" />
    <button className="ml-[28px] h-[30px] w-[102px] rounded-[4px] border border-[#8a99a3] bg-white pb-[2px] text-[12.500px] leading-none text-[#a5b0b8]">Tamam</button>
    <div className="absolute top-[13px] right-0 flex h-[34px] w-[34px] items-center justify-center rounded-l-[4px] bg-[#0f1a22] shadow-[0_2px_14px_rgba(0,0,0,0.3)]">
      <svg width="18" height="18" viewBox="0 0 18 18" fill="#fff">
        <path d="M6.500 5.500H3Q.5 6 .5 8.500T3 11.500h1V17h2.500v-5.500H7v-6zM7.500 5L14 1.500V14l-6.500-2.500zM15 1h2v14h-2z" />
      </svg>
    </div>
  </div>
);

const ModeBar = () => (
  <div className="flex h-[60px] shrink-0 items-center justify-center bg-white">
    <Action label="Ana Sayfa"><path d="M10 1l9 8.500-1.500 1.500H17v7.500h-5V13H8v5.500H3V11h-.5L1 9.500z" fill="currentColor" stroke="none" /></Action>
    <Action label="Sığdır">
      <path d="M2 2h16v16H2z" strokeWidth="1.800" /><path d="M10 4l2.500 3h-5zM10 16l2.500-3h-5zM4 10l3-2.500v5zM16 10l-3-2.500v5z" fill="currentColor" stroke="none" />
    </Action>
    <Action label="Yörünge" active>
      <path d="M5.800 5.500Q7.500 2 10 2q3 0 4 4.500M15.500 8.500q3 1 3 2.700 0 2.800-6.500 2.800M7 8Q1.500 9 1.500 11.300q0 2 4.500 2.700M6.500 16q3 3.500 6 1" strokeWidth="2" />
      <path d="M11.500 5h5.500L14.500 9.500zM12.500 10.500v6.500l-4-3z" fill="currentColor" stroke="none" />
      <path d="M4 8.500h5" strokeWidth="1.600" />
    </Action>
    <Action label="Yatay Kaydır">
      <path d="M10 3v14M3 10h14" /><path d="M10 .8l3 3.700H7zM10 19.200l3-3.700H7zM.8 10l3.700-3v6zM19.200 10l-3.700-3v6z" fill="currentColor" stroke="none" />
    </Action>
    <Action label="Yakınlaştır"><circle cx="9" cy="8.500" r="6.300" /><path d="M13.500 13l4.500 4.500" strokeWidth="2.300" /></Action>
    <Action label="1inci Kişi">
      <circle cx="10" cy="3" r="2" fill="currentColor" stroke="none" />
      <path d="M10 6v6M10 11l-3.500 7.500M10 11l3.500 7.500" /><path d="M9 6.500l-3 2V12M11 6.500l2 3 2.500 1.500" strokeWidth="1.500" /><path d="M8.500 5.500h3v7h-3z" fill="currentColor" stroke="none" />
    </Action>
    <Action label="Bölüm">
      <path d="M2 4l10.500 3v12L2 15z" strokeWidth="1.500" /><path d="M10.500 8.500L5.500 7v7l5 1.500V13l-2-.5v-2.500l2 .5z" fill="currentColor" stroke="none" />
      <path d="M3.500 3.500L10 .5l9 3-5.500 3zM14 8l5-2.500v4L14 12zM14 14l5-3v4l-5 3z" fill="currentColor" stroke="none" />
    </Action>
    <Action label="Ölç" active>
      <path d="M1 1.500v6.500M19 1.500v6.500M4 5h12" strokeWidth="1.700" /><path d="M2.500 5L7 2v6zM17.500 5L13 2v6z" fill="currentColor" stroke="none" />
      <path d="M0 10.500h2v2h1.500v-2h2v2H7v-2h2v2h1.500v-2h2v2H14v-2h2v2h1.500v-2H20V17H0z" fill="currentColor" stroke="none" />
    </Action>
    <Action label="Açılımını Yap">
      <path d="M10 1l8.500 4-8.500 4-8.500-4zM1 7l8 3.700V19l-8-4zM19 7l-8 3.700V19l8-4z" fill="currentColor" stroke="none" />
    </Action>
  </div>
);

export default function App() {
  return (
    <div className="flex h-[768px] w-[1366px] flex-col overflow-hidden bg-white font-['Noto_Sans',sans-serif]">
      <SystemBar />
      <div className="flex min-h-0 grow">
        <Launcher />
        <main className="flex w-[1301px] flex-col">
          <TabStrip />
          <AddressBar />
          <Bookmarks />
          <AppHeader />
          <ViewerToolbar />
          <Canvas />
          <MeasureBar />
          <ModeBar />
        </main>
      </div>
    </div>
  );
}
